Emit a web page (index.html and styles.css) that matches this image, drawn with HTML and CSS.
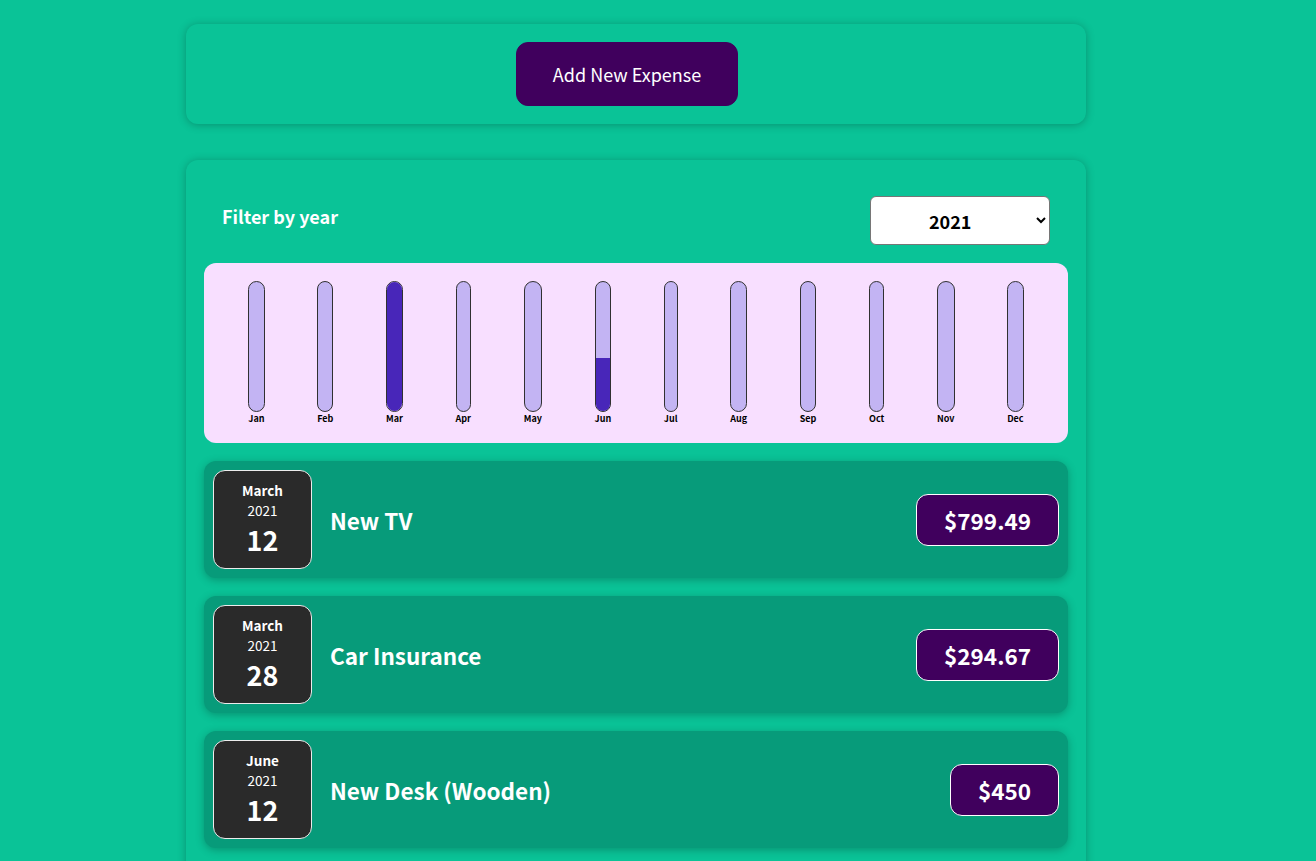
FILE: index.html
```html
<!DOCTYPE html>
<html lang="en">
<head>
<meta charset="utf-8">
<title>Expenses</title>
<link rel="stylesheet" href="styles.css">
</head>
<body>
<div class="app">
  <div class="new-expense card">
    <button class="add-btn" type="button">Add New Expense</button>
  </div>

  <div class="expenses card">
    <div class="filter">
      <div class="filter-control">
        <label for="year">Filter by year</label>
        <select id="year">
          <option>2022</option>
          <option selected>2021</option>
          <option>2020</option>
          <option>2019</option>
        </select>
      </div>
    </div>

    <div class="chart">
      <div class="chart-bar"><div class="bar-inner"><div class="bar-fill" style="height:0%"></div></div><div class="bar-label">Jan</div></div>
      <div class="chart-bar"><div class="bar-inner"><div class="bar-fill" style="height:0%"></div></div><div class="bar-label">Feb</div></div>
      <div class="chart-bar"><div class="bar-inner"><div class="bar-fill" style="height:100%"></div></div><div class="bar-label">Mar</div></div>
      <div class="chart-bar"><div class="bar-inner"><div class="bar-fill" style="height:0%"></div></div><div class="bar-label">Apr</div></div>
      <div class="chart-bar"><div class="bar-inner"><div class="bar-fill" style="height:0%"></div></div><div class="bar-label">May</div></div>
      <div class="chart-bar"><div class="bar-inner"><div class="bar-fill" style="height:41.1%"></div></div><div class="bar-label">Jun</div></div>
      <div class="chart-bar"><div class="bar-inner"><div class="bar-fill" style="height:0%"></div></div><div class="bar-label">Jul</div></div>
      <div class="chart-bar"><div class="bar-inner"><div class="bar-fill" style="height:0%"></div></div><div class="bar-label">Aug</div></div>
      <div class="chart-bar"><div class="bar-inner"><div class="bar-fill" style="height:0%"></div></div><div class="bar-label">Sep</div></div>
      <div class="chart-bar"><div class="bar-inner"><div class="bar-fill" style="height:0%"></div></div><div class="bar-label">Oct</div></div>
      <div class="chart-bar"><div class="bar-inner"><div class="bar-fill" style="height:0%"></div></div><div class="bar-label">Nov</div></div>
      <div class="chart-bar"><div class="bar-inner"><div class="bar-fill" style="height:0%"></div></div><div class="bar-label">Dec</div></div>
    </div>

    <ul class="expense-list">
      <li class="expense-item">
        <div class="expense-date">
          <div class="date-month">March</div>
          <div class="date-year">2021</div>
          <div class="date-day">12</div>
        </div>
        <div class="expense-desc">
          <h2>New TV</h2>
          <div class="expense-price">$799.49</div>
        </div>
      </li>
      <li class="expense-item">
        <div class="expense-date">
          <div class="date-month">March</div>
          <div class="date-year">2021</div>
          <div class="date-day">28</div>
        </div>
        <div class="expense-desc">
          <h2>Car Insurance</h2>
          <div class="expense-price">$294.67</div>
        </div>
      </li>
      <li class="expense-item">
        <div class="expense-date">
          <div class="date-month">June</div>
          <div class="date-year">2021</div>
          <div class="date-day">12</div>
        </div>
        <div class="expense-desc">
          <h2>New Desk (Wooden)</h2>
          <div class="expense-price">$450</div>
        </div>
      </li>
    </ul>
  </div>
</div>
</body>
</html>
```

FILE: styles.css
```css
html {
  font-size: 18px;
}

* {
  box-sizing: border-box;
}

body {
  margin: 0;
  background-color: #0ac397;
  font-family: "Noto Sans CJK JP", "Noto Sans", sans-serif;
}

.app {
  padding: 24px 44px 0 0;
}

.card {
  border-radius: 12px;
  box-shadow: 0 1px 8px rgba(0, 0, 0, 0.25);
}

.new-expense {
  background-color: #0ac397;
  padding: 1rem;
  margin: 0 auto 2rem;
  width: 50rem;
  max-width: 95%;
  text-align: center;
}

.add-btn {
  font: inherit;
  cursor: pointer;
  padding: 1rem 2rem;
  border: 1px solid #40005d;
  background-color: #40005d;
  color: #fff;
  border-radius: 12px;
  margin-right: 1rem;
}

.expenses {
  padding: 1rem;
  background-color: #0ac397;
  margin: 0 auto 2rem;
  width: 50rem;
  max-width: 95%;
}

.filter {
  color: #fff;
  padding: 0 1rem;
}

.filter-control {
  display: flex;
  width: 100%;
  align-items: center;
  justify-content: space-between;
  margin: 1rem 0;
}

.filter-control label {
  font-weight: bold;
  margin-bottom: 0.5rem;
}

.filter-control select {
  font: inherit;
  font-weight: bold;
  padding: 0.5rem 3rem;
  border-radius: 6px;
  border: 1px solid #767676;
  background-color: #fff;
  color: #000;
  height: 49px;
  width: 180px;
}

.chart {
  padding: 1rem;
  border-radius: 12px;
  background-color: #f8dfff;
  text-align: center;
  display: flex;
  justify-content: space-around;
  height: 10rem;
}

.chart-bar {
  height: 100%;
  display: flex;
  flex-direction: column;
  align-items: center;
}

.bar-inner {
  height: 100%;
  width: 100%;
  border: 1px solid #313131;
  border-radius: 12px;
  background-color: #c3b4f3;
  overflow: hidden;
  display: flex;
  flex-direction: column;
  justify-content: flex-end;
}

.bar-fill {
  background-color: #4826b9;
  width: 100%;
}

.bar-label {
  font-weight: bold;
  font-size: 0.5rem;
  text-align: center;
  color: #000;
}

.expense-list {
  list-style: none;
  padding: 0;
  margin: 0;
}

.expense-item {
  display: flex;
  justify-content: space-between;
  align-items: center;
  box-shadow: 0 2px 8px rgba(0, 0, 0, 0.25);
  padding: 0.5rem;
  margin: 1rem 0;
  border-radius: 12px;
  background-color: #079b7a;
}

.expense-date {
  display: flex;
  flex-direction: column;
  width: 5.5rem;
  height: 5.5rem;
  border: 1px solid #ececec;
  background-color: #2a2a2a;
  color: #fff;
  border-radius: 12px;
  align-items: center;
  justify-content: center;
  flex-shrink: 0;
}

.date-month {
  font-size: 0.75rem;
  font-weight: bold;
}

.date-year {
  font-size: 0.75rem;
}

.date-day {
  font-size: 1.5rem;
  font-weight: bold;
}

.expense-desc {
  display: flex;
  flex-direction: row;
  align-items: center;
  justify-content: flex-start;
  flex: 1;
}

.expense-desc h2 {
  font-size: 1.25rem;
  flex: 1;
  margin: 0 1rem;
  color: #fff;
}

.expense-price {
  font-size: 1.25rem;
  font-weight: bold;
  color: #fff;
  background-color: #40005d;
  border: 1px solid #fff;
  padding: 0.5rem 1.5rem;
  border-radius: 12px;
}
```
